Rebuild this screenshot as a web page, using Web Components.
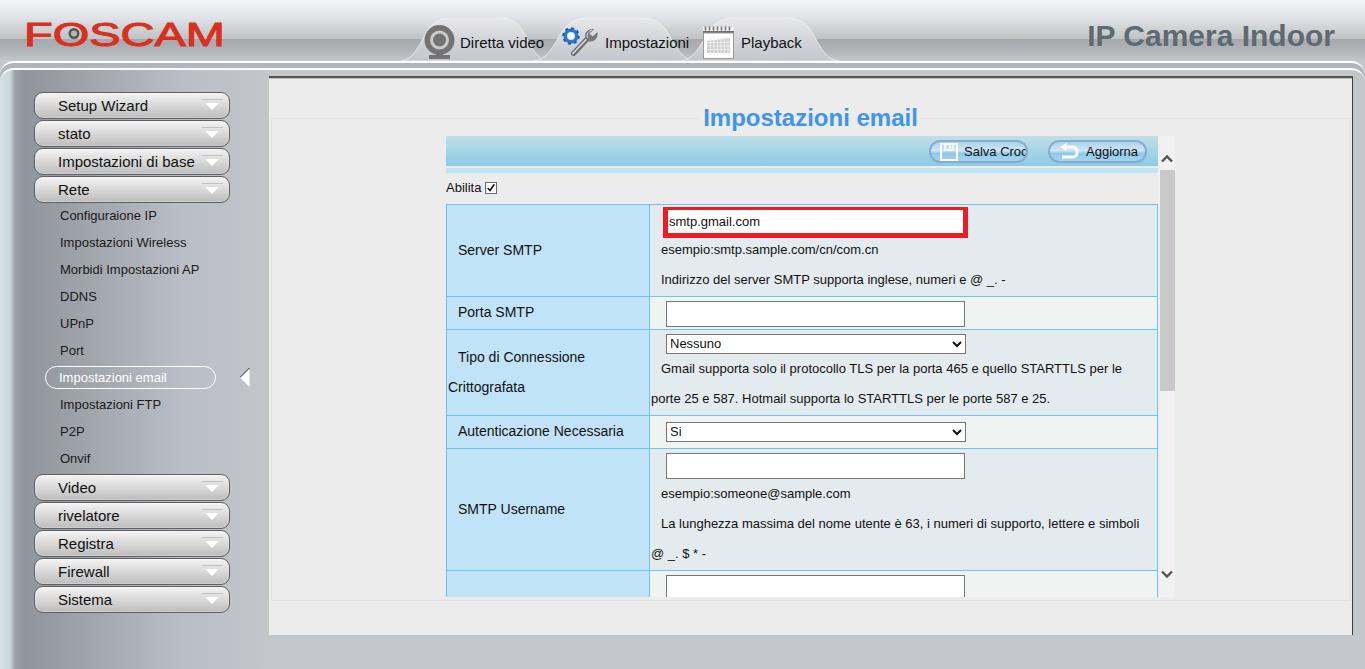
<!DOCTYPE html>
<html lang="it"><head><meta charset="utf-8"><title>Foscam</title>
<style>
html,body{margin:0;padding:0;height:100%;overflow:hidden}
body{font-family:"Liberation Sans",Arial,sans-serif;color:#111;background:#c3c6cb}
</style></head><body>
<foscam-app>
  <foscam-header slot="header">
    <foscam-tab style="--pad:23px;--gap:5px;width:148px">
      <svg slot="icon" width="31" height="35" viewBox="0 0 31 35"><circle cx="15.5" cy="15" r="15" fill="#737373"/><circle cx="15.5" cy="15" r="9.5" fill="#c9c9c9"/><circle cx="15.5" cy="15" r="6.5" fill="#737373"/><rect x="12" y="27" width="7" height="5" fill="#737373"/><rect x="5" y="30" width="21" height="4" fill="#737373"/></svg>
      Diretta video</foscam-tab>
    <foscam-tab style="--pad:28px;--gap:6px;width:161px;margin-left:-15px">
      <svg slot="icon" width="37" height="30" viewBox="0 0 37 30"><circle cx="9" cy="9" r="5.800" fill="none" stroke="#2c78cf" stroke-width="3.600"/><circle cx="9" cy="9" r="7.800" fill="none" stroke="#1e5fae" stroke-width="2" stroke-dasharray="3 3.100"/><circle cx="9" cy="9" r="3.600" fill="#f4f6fa"/><path d="M11.500 26.500L27 10" stroke="#6a6a6a" stroke-width="5" stroke-linecap="round"/><path d="M11 26.500L26 10.500" stroke="#d8d8d8" stroke-width="1.800" stroke-linecap="round"/><path d="M24 12C21 7 25 1 32 2L27.500 6.500L30.500 9.500L35.500 5C36.500 12 31 16 26 14Z" fill="#777"/><path d="M25.500 11C24 7 27 3.500 30 3" fill="none" stroke="#ddd" stroke-width="1"/></svg>
      Impostazioni</foscam-tab>
    <foscam-tab style="--pad:22px;--gap:7px;width:158px;margin-left:-14px">
      <svg slot="icon" width="31" height="33" viewBox="0 0 31 33"><rect x="0" y="1" width="31" height="4" fill="#f1f1f1"/><path d="M2.500 4.500V.5M6.500 4.500V.5M10.500 4.500V.5M14.500 4.500V.5M18.500 4.500V.5M22.500 4.500V.5M26.500 4.500V.5" stroke="#777" stroke-width="1.600"/><rect x="0" y="5" width="31" height="2" fill="#6f6f6f"/><rect x=".5" y="7" width="30" height="25.500" fill="#fff" stroke="#9a9a9a"/><path d="M4 15l23-3v15H4z" fill="#cfcfcf"/><path d="M7.500 11v18M11 11v18M14.500 11v18M18 11v18M21.500 11v18M25 11v18M3 16.500h25M3 20h25M3 23.500h25" stroke="#ececec" stroke-width="1"/></svg>
      Playback</foscam-tab>
  </foscam-header>
  <side-menu slot="side">
    <menu-btn>Setup Wizard</menu-btn>
    <menu-btn>stato</menu-btn>
    <menu-btn>Impostazioni di base</menu-btn>
    <menu-btn>Rete</menu-btn>
    <menu-items>
      <menu-item>Configuraione IP</menu-item>
      <menu-item>Impostazioni Wireless</menu-item>
      <menu-item>Morbidi Impostazioni AP</menu-item>
      <menu-item>DDNS</menu-item>
      <menu-item>UPnP</menu-item>
      <menu-item>Port</menu-item>
      <menu-item selected>Impostazioni email</menu-item>
      <menu-item>Impostazioni FTP</menu-item>
      <menu-item>P2P</menu-item>
      <menu-item>Onvif</menu-item>
    </menu-items>
    <menu-btn>Video</menu-btn>
    <menu-btn>rivelatore</menu-btn>
    <menu-btn>Registra</menu-btn>
    <menu-btn>Firewall</menu-btn>
    <menu-btn>Sistema</menu-btn>
  </side-menu>
  <email-panel slot="main">
    <form-toolbar>
      <tool-btn label="Salva Croc" icon="save" style="--tx:33px"></tool-btn>
      <tool-btn label="Aggiorna" icon="back" style="--tx:36px"></tool-btn>
    </form-toolbar>
    <enable-row>Abilita</enable-row>
    <form-table>
      <form-row label="Server SMTP" style="height:91px">
        <field-input value="smtp.gmail.com" highlight></field-input>
        <field-note>esempio:smtp.sample.com/cn/com.cn</field-note>
        <field-note>Indirizzo del server SMTP supporta inglese, numeri e @ _. -</field-note>
      </form-row>
      <form-row label="Porta SMTP" alt style="height:32px"><field-input style="margin-top:4px"></field-input></form-row>
      <form-row label="Tipo di Connessione Crittografata" style="height:85px">
        <field-select value="Nessuno" style="margin-top:4px"></field-select>
        <field-note>Gmail supporta solo il protocollo TLS per la porta 465 e quello STARTTLS per le porte 25 e 587. Hotmail supporta lo STARTTLS per le porte 587 e 25.</field-note>
      </form-row>
      <form-row label="Autenticazione Necessaria" alt style="height:32px"><field-select value="Si" style="margin-top:6px"></field-select></form-row>
      <form-row label="SMTP Username" style="height:121px">
        <field-input style="margin-top:4px"></field-input>
        <field-note>esempio:someone@sample.com</field-note>
        <field-note>La lunghezza massima del nome utente è 63, i numeri di supporto, lettere e simboli @ _. $ * -</field-note>
      </form-row>
      <form-row label="" alt style="height:40px"><field-input style="margin-top:4px"></field-input></form-row>
    </form-table>
  </email-panel>
</foscam-app>
<script>
function def(name, css, html, extra){
  customElements.define(name, class extends HTMLElement{
    constructor(){super();const r=this.attachShadow({mode:'open'});
      r.innerHTML='<style>'+css+'</style>'+(typeof html==='function'?html(this):html);}
    connectedCallback(){ if(extra) extra(this); }
  });
}
def('foscam-app',`
:host{display:block;width:1365px;height:669px;overflow:hidden;background:linear-gradient(180deg,#a5a9ad 0,#c4c7cb 61px,#c3c6cb 100%)}
.shell{border-top:2px solid #fff;border-radius:14px 14px 0 0;padding-top:5px;height:606px;background:linear-gradient(180deg,#aeb3bb 0,#b4b8c0 6px)}
.inner{border-top:2px solid #fff;border-radius:14px 14px 0 0;padding-top:6px;height:598px;display:flex;align-items:flex-start;
 background:linear-gradient(90deg,#d6e2e4 0,#c9d6d8 10px,#9ca2a8 15px,#8f959b 24px,#a6abb2 110px,#b9bdc5 180px,#c3c6cb 269px)}
`,`<slot name="header"></slot><div class="shell"><div class="inner"><slot name="side"></slot><slot name="main"></slot></div></div>`);

def('foscam-header',`
:host{display:flex;height:61px;box-sizing:border-box;align-items:flex-start;font-family:"Liberation Sans",Arial,sans-serif;
 background:linear-gradient(180deg,#f3f5f8 0,#dfe2e6 18px,#c1c4c5 38.500px,#a5a9ad 39px,#b0b4b8 50px,#c4c7cb 61px)}
.logo{display:block;margin:19px 0 0 27px;flex:none;overflow:visible}
.tabs{display:flex;margin:18px 0 0 178px;flex:none}
.title{margin:18px 30px 0 auto;font:bold 30px/36px "Liberation Sans",Arial,sans-serif;color:#5f6971;white-space:nowrap}
`,`<svg class="logo" width="196" height="30" viewBox="0 0 196 30">
<text x="-3" y="27" font-family="Liberation Sans" font-size="33" font-weight="400" fill="#d9301f" stroke="#d9301f" stroke-width="1" textLength="201" lengthAdjust="spacingAndGlyphs">FOSCAM</text>
<circle cx="47" cy="14.500" r="5.500" fill="#555"/><circle cx="47" cy="14.500" r="3" fill="#b5b5b5"/></svg>
<div class="tabs"><slot></slot></div><div class="title">IP Camera Indoor</div>`);

def('foscam-tab',`
:host{display:flex;position:relative;height:43px;box-sizing:border-box;padding-left:var(--pad);gap:var(--gap);align-items:center;font-size:15px;color:#111;white-space:nowrap;flex:none}
svg.bg{position:absolute;left:0;top:0;width:100%;height:100%;z-index:0}
.c{position:relative;display:flex;align-items:center;gap:var(--gap);z-index:1;padding-top:5px;height:36px}
`,`<svg class="bg" viewBox="0 0 150 43" preserveAspectRatio="none"><defs><linearGradient id="g" x1="0" y1="0" x2="0" y2="1"><stop offset="0" stop-color="#e9e9e9"/><stop offset=".45" stop-color="#d5d6da"/><stop offset="1" stop-color="#c4c7d0"/></linearGradient></defs><path d="M0 43C10 42 15 33 21 23C27 11 33 0 50 0H100C117 0 122 9 129 23C135 34 140 42 150 43Z" fill="url(#g)" stroke="#f4f4f4" stroke-width=".7"/></svg><div class="c"><slot name="icon"></slot><slot></slot></div>`);

def('side-menu',`:host{display:block;width:269px;flex:none;box-sizing:border-box;padding:16px 0 0 34px}`,`<slot></slot>`);
def('menu-btn',`
:host{display:flex;align-items:center;position:relative;box-sizing:border-box;width:196px;height:27px;margin-bottom:1px;padding-left:23px;border:1px solid #5d5f63;border-radius:9px;font-size:15px;color:#111;
background:linear-gradient(180deg,#f4f4f4 0,#dedede 40%,#bdbdbd 100%);box-shadow:inset 0 0 0 1px rgba(255,255,255,.25)}
i{position:absolute;right:6px;top:6px;width:21px;height:1px;background:#c0c0c0}
b{position:absolute;right:10px;top:10px;width:0;height:0;border-left:7px solid transparent;border-right:7px solid transparent;border-top:7px solid #fff}
`,`<slot></slot><i></i><b></b>`);
def('menu-items',`:host{display:block;padding:0 0 2px 0;margin-top:-2px}`,`<slot></slot>`);
def('menu-item',`
:host{display:flex;align-items:center;position:relative;box-sizing:border-box;height:27px;width:171px;margin-left:11px;padding-left:15px;font-size:13px;color:#1a1a1a;white-space:nowrap}
:host([selected]){color:#fff;padding-left:14px;}
.pill{display:none;position:absolute;left:0;top:2px;right:0;height:23px;box-sizing:border-box;border:1.500px solid #fff;border-radius:12px}
.arr{display:none;position:absolute;left:195px;top:4px}
:host([selected]) .pill,:host([selected]) .arr{display:block}
`,`<span class="pill"></span><slot></slot><svg class="arr" width="10" height="19" viewBox="0 0 10 19"><path d="M9.500 0V19L0 9.500Z" fill="#fff"/><path d="M9.500 0L0 9.500" stroke="#222" stroke-width="1"/></svg>`);

def('email-panel',`
:host{display:block;width:1084px;height:559px;box-sizing:border-box;background:#ececec;border-top:2px solid #555;border-right:1px solid #3c3c3c;box-shadow:inset 0 1px 0 #bbb}
fieldset{margin:26px 2px 0 2px;height:497px;box-sizing:border-box;border:1px solid #e4e4e4;padding:4px 0 0 0;min-width:0}
legend{margin:0 auto;padding:0 3px;font:bold 24px/28px "Liberation Sans",Arial,sans-serif;color:#3f94ec}
.wrap{display:flex;width:729px;height:461px;overflow:hidden;margin-left:174px}
.form{width:712px;flex:none;overflow:hidden;font-size:13px}
.sb{width:16px;margin-left:1px;flex:none;background:#f1f1f1;display:flex;flex-direction:column;align-items:flex-end}
.up{height:34px;width:16px;display:flex;align-items:center;justify-content:center;padding-top:10px;box-sizing:border-box}
.th{width:15px;height:221px;background:#c9c9c9}
.dn{margin-top:auto;height:27px;width:16px;display:flex;align-items:flex-start;justify-content:center;box-sizing:border-box}
`,`<fieldset><legend>Impostazioni email</legend><div class="wrap"><div class="form"><slot></slot></div>
<div class="sb"><div class="up"><svg width="12" height="9" viewBox="0 0 12 9"><path d="M1 7.500L6 2.500L11 7.500" fill="none" stroke="#555" stroke-width="2.400"/></svg></div><div class="th"></div>
<div class="dn"><svg width="12" height="9" viewBox="0 0 12 9"><path d="M1 1.500L6 6.500L11 1.500" fill="none" stroke="#555" stroke-width="2.400"/></svg></div></div></div></fieldset>`);

def('form-toolbar',`
:host{display:flex;position:relative;justify-content:flex-end;gap:20px;box-sizing:border-box;height:37px;padding:4px 11px 0 0;
background:linear-gradient(180deg,#c0dfe8 0,#8ccbe5 30px,#ececec 30px,#ececec 32px,#bde5f2 32px,#bde5f2 37px)}
`,`<slot></slot>`);
const ICONS={save:`<svg width="18" height="18" viewBox="0 0 18 18"><path d="M1 1H17V17H1Z" fill="none" stroke="#fff" stroke-width="2"/><path d="M5 1.500H13V7H5Z" fill="none" stroke="#fff" stroke-width="1.400"/><rect x="9" y="3" width="2" height="2.500" fill="#fff"/></svg>`,
back:`<svg width="20" height="16" viewBox="0 0 20 16"><path d="M6 4H14C19.500 4 19.500 14 14 14H3" fill="none" stroke="#fff" stroke-width="3"/><path d="M7.500 0L1 4L7.500 8Z" fill="#fff"/></svg>`};
def('tool-btn',`
:host{display:block;position:relative;box-sizing:border-box;width:99px;height:23px;border:2.500px solid #86adcd;border-radius:12px;background:linear-gradient(180deg,#a9d4ea 0,#cfe6f4 45%,#8fc8ea 60%,#a5d4ee 100%);overflow:hidden;font-size:13px;color:#111;white-space:nowrap}
svg{position:absolute;left:9px;top:.5px}
span{position:absolute;left:var(--tx);top:0;line-height:20px}
`,h=>`${ICONS[h.getAttribute('icon')]}<span>${h.getAttribute('label')}</span>`);
def('enable-row',`
:host{display:flex;align-items:center;gap:4px;height:31px;box-sizing:border-box;padding-bottom:2px;font-size:13px;color:#111}
.box{width:12px;height:12px;box-sizing:border-box;border:1px solid #6b6b6b;background:#fff;display:block}
`,`<slot></slot><svg class="box" viewBox="0 0 12 12" style="overflow:visible"><path d="M2 6L4.800 9L10 1.500" fill="none" stroke="#111" stroke-width="1.800"/></svg>`);
def('form-table',`:host{display:block;border-top:1px solid #6cc5ea;border-left:1px solid #6cc5ea;border-right:1px solid #6cc5ea}`,`<slot></slot>`);
def('form-row',`
:host{display:grid;grid-template-columns:203px 1fr;box-sizing:content-box;border-bottom:1px solid #6cc5ea;overflow:hidden}
.l{background:#c1e3f8;border-right:1px solid #6cc5ea;display:flex;align-items:center;padding:0 0 2px 1px;font-size:14px;line-height:30px;color:#111}
.l div{text-indent:10px}
.r{background:#e4ebef;padding-left:0}
:host([alt]) .r{background:#f0f3f2}
`,h=>`<div class="l"><div>${h.getAttribute('label')}</div></div><div class="r"><slot></slot></div>`);
def('field-input',`
:host{display:block;margin-left:16px;height:26px;width:299px}
:host([highlight]){margin:2px 0 -3px 13px;width:305px;height:31px}
input{display:block;box-sizing:border-box;width:100%;height:100%;border:1px solid #767676;background:#fff;padding:0 2px;font:13px "Liberation Sans",Arial,sans-serif;color:#111;border-radius:0;outline:0}
:host([highlight]) input{border:solid #ed1c24;border-width:3px 5px 5px 5px;padding:0 1px}
`,h=>`<input type="text" value="${h.getAttribute('value')||''}">`);
def('field-select',`
:host{display:block;margin-left:16px;height:20px;width:300px}
select{display:block;box-sizing:border-box;width:100%;height:100%;border:1px solid #767676;background:#fff;padding:0 0 2px 0;text-indent:-1px;font:13px "Liberation Sans",Arial,sans-serif;color:#111;border-radius:0}
`,h=>`<select><option>${h.getAttribute('value')}</option></select>`);
def('field-note',`:host{display:block;padding:0 6px 0 1px;text-indent:10px;line-height:30px;font-size:13px;color:#111}`,`<slot></slot>`);
</script>
</body></html>
